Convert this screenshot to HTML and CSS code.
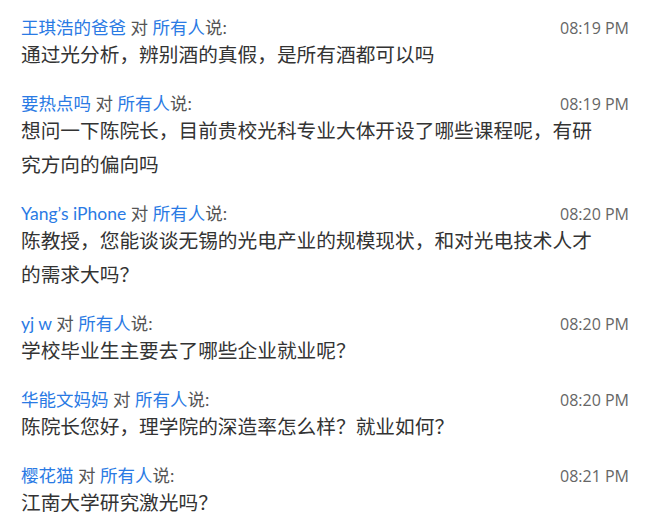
FILE: index.html
```html
<!DOCTYPE html>
<html lang="zh-CN">
<head>
    <meta charset="UTF-8">
    <meta name="viewport" content="width=device-width, initial-scale=1.0">
    <title>聊天记录</title>
    <link rel="stylesheet" href="styles.css">
</head>
<body>
    <div class="chat-list">
        <div class="chat-item">
            <div class="chat-head">
                <div class="chat-from"><span class="user">王琪浩的爸爸</span> 对 <span class="user">所有人</span>说:</div>
                <div class="chat-time">08:19 PM</div>
            </div>
            <div class="chat-text">通过光分析，辨别酒的真假，是所有酒都可以吗</div>
        </div>
        <div class="chat-item">
            <div class="chat-head">
                <div class="chat-from"><span class="user">要热点吗</span> 对 <span class="user">所有人</span>说:</div>
                <div class="chat-time">08:19 PM</div>
            </div>
            <div class="chat-text">想问一下陈院长，目前贵校光科专业大体开设了哪些课程呢，有研究方向的偏向吗</div>
        </div>
        <div class="chat-item">
            <div class="chat-head">
                <div class="chat-from"><span class="user">Yang’s iPhone</span> 对 <span class="user">所有人</span>说:</div>
                <div class="chat-time">08:20 PM</div>
            </div>
            <div class="chat-text">陈教授，您能谈谈无锡的光电产业的规模现状，和对光电技术人才的需求大吗？</div>
        </div>
        <div class="chat-item">
            <div class="chat-head">
                <div class="chat-from"><span class="user">yj w</span> 对 <span class="user">所有人</span>说:</div>
                <div class="chat-time">08:20 PM</div>
            </div>
            <div class="chat-text">学校毕业生主要去了哪些企业就业呢？</div>
        </div>
        <div class="chat-item">
            <div class="chat-head">
                <div class="chat-from"><span class="user">华能文妈妈</span> 对 <span class="user">所有人</span>说:</div>
                <div class="chat-time">08:20 PM</div>
            </div>
            <div class="chat-text">陈院长您好，理学院的深造率怎么样？就业如何？</div>
        </div>
        <div class="chat-item">
            <div class="chat-head">
                <div class="chat-from"><span class="user">樱花猫</span> 对 <span class="user">所有人</span>说:</div>
                <div class="chat-time">08:21 PM</div>
            </div>
            <div class="chat-text">江南大学研究激光吗？</div>
        </div>
    </div>
</body>
</html>
```

FILE: styles.css
```css
body {
    margin: 0;
    padding: 0;
    background-color: #fff;
    font-family: "Open Sans", "Noto Sans CJK SC", sans-serif;
    overflow: hidden;
}
.chat-list {
    padding: 18px 21px 0 21px;
}
.chat-item {
    margin-bottom: 22px;
}
.chat-head {
    display: flex;
    justify-content: space-between;
    align-items: center;
    height: 20px;
}
.chat-from {
    font-family: Lato, "Noto Sans CJK SC", sans-serif;
    font-size: 17.5px;
    line-height: 20px;
    color: #555;
    white-space: nowrap;
}
.chat-from .user {
    color: #2a7ae4;
}
.chat-time {
    font-size: 16px;
    line-height: 20px;
    color: #666;
}
.chat-text {
    max-width: 580px;
    font-size: 19.7px;
    line-height: 34px;
    color: #333;
}
```
